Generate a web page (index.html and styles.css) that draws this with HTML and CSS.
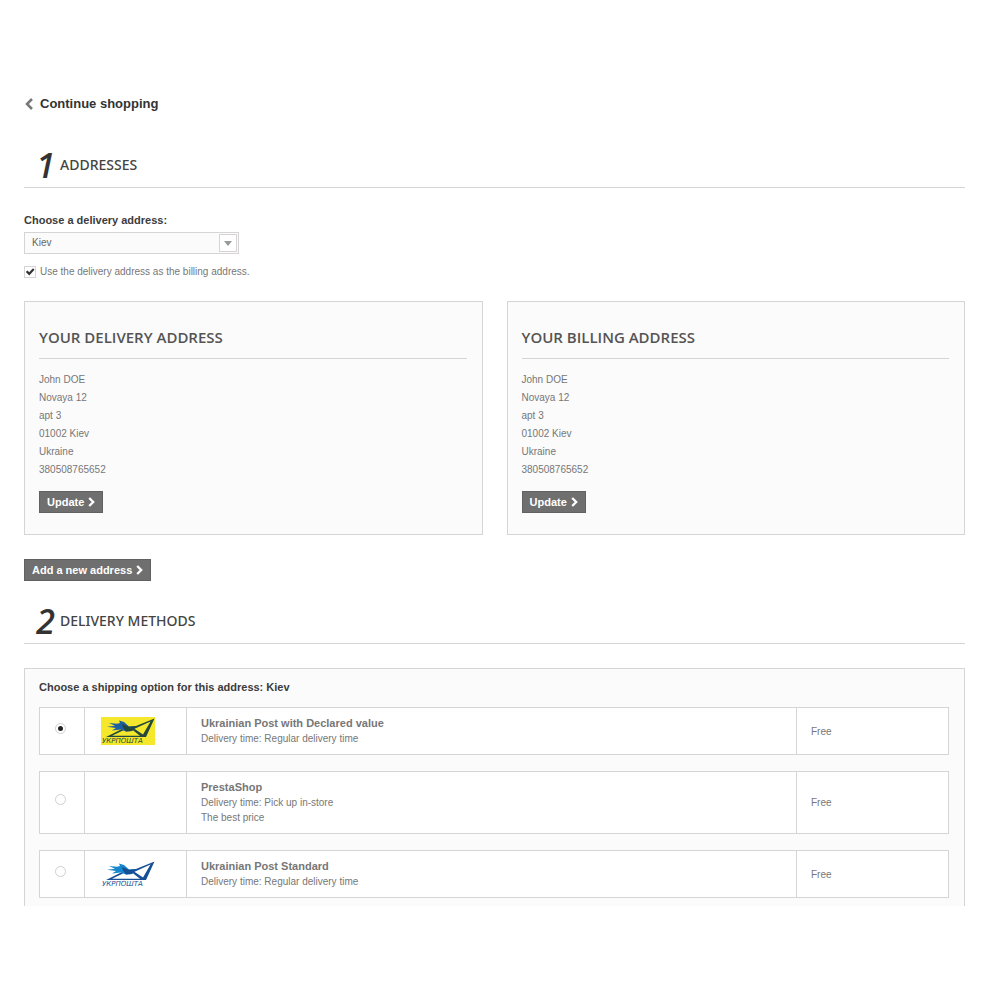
FILE: index.html
```html
<!DOCTYPE html>
<html lang="en">
<head>
<meta charset="utf-8">
<meta name="viewport" content="width=device-width, initial-scale=1">
<title>Checkout</title>
<link rel="stylesheet" href="styles.css">
</head>
<body>
<svg class="sprite" aria-hidden="true">
  <symbol id="chevron-right" viewBox="0 0 7 10"><path d="M1.200 1 5.200 5 1.200 9" fill="none" stroke="currentColor" stroke-width="2.300"/></symbol>
  <symbol id="post-logo" viewBox="0 0 54 28">
    <path d="M5 20 L22 11.500 L24 12.500 L11 18.700 H40 L41 20 Z" fill="var(--dark)"/>
    <path d="M53.500 1.500 L45 20 H40.500 L31 12.500 L33 11.500 L42 17.500 L49.500 4.500 L33 12 L30 11 Z" fill="var(--dark)"/>
    <path d="M18 3.500 L23 5 L28 9.500 L35.500 9 L31 14 L25 14.500 L20 12.500 L11 13.500 L15 11 L6 9.800 L14 8.800 L8 6 L16 6.800 L19 6 Z" fill="var(--wing)"/>
    <path d="M21 7 L28 9.800 L35.500 9 L31 14 L25 14.500 L22 10.500 Z" fill="var(--dark)"/>
    <text class="wordmark" x="1" y="26">УКРПОШТА</text>
  </symbol>
</svg>
<main class="page">
  <a class="back" href="#"><svg class="back-icon" viewBox="0 0 9 12" aria-hidden="true"><path d="M8 1 3 6 8 11" fill="none" stroke="currentColor" stroke-width="2.500"/></svg>Continue shopping</a>

  <h1 class="step"><span class="step-number">1</span>ADDRESSES</h1>

  <div class="chooser">
    <label class="chooser-label" for="address">Choose a delivery address:</label>
    <div class="select">
      <select id="address"><option>Kiev</option></select>
      <span class="select-arrow" aria-hidden="true"></span>
    </div>
    <label class="same"><input class="tick" type="checkbox" checked>Use the delivery address as the billing address.</label>
  </div>

  <div class="cards">
    <section class="card">
      <h2 class="card-title">YOUR DELIVERY ADDRESS</h2>
      <ul class="lines"><li>John DOE</li><li>Novaya 12</li><li>apt 3</li><li>01002 Kiev</li><li>Ukraine</li><li>380508765652</li></ul>
      <button class="button" type="button">Update<svg class="chevron" aria-hidden="true"><use href="#chevron-right"/></svg></button>
    </section>
    <section class="card">
      <h2 class="card-title">YOUR BILLING ADDRESS</h2>
      <ul class="lines"><li>John DOE</li><li>Novaya 12</li><li>apt 3</li><li>01002 Kiev</li><li>Ukraine</li><li>380508765652</li></ul>
      <button class="button" type="button">Update<svg class="chevron" aria-hidden="true"><use href="#chevron-right"/></svg></button>
    </section>
  </div>

  <button class="button" type="button">Add a new address<svg class="chevron" aria-hidden="true"><use href="#chevron-right"/></svg></button>

  <h1 class="step step-delivery"><span class="step-number">2</span>DELIVERY METHODS</h1>

  <section class="shipping">
    <h3 class="shipping-title">Choose a shipping option for this address: Kiev</h3>
    <div class="options">
      <div class="option">
        <div class="cell pick"><input class="radio" type="radio" name="carrier" id="declared" checked></div>
        <div class="cell"><svg class="logo logo-yellow" role="img" aria-label="Ukrposhta"><use href="#post-logo"/></svg></div>
        <label class="cell details" for="declared"><strong>Ukrainian Post with Declared value</strong><span>Delivery time: Regular delivery time</span></label>
        <div class="cell">Free</div>
      </div>
      <div class="option">
        <div class="cell pick"><input class="radio" type="radio" name="carrier" id="store"></div>
        <div class="cell"></div>
        <label class="cell details" for="store"><strong>PrestaShop</strong><span>Delivery time: Pick up in-store</span><span>The best price</span></label>
        <div class="cell">Free</div>
      </div>
      <div class="option">
        <div class="cell pick"><input class="radio" type="radio" name="carrier" id="standard"></div>
        <div class="cell"><svg class="logo logo-blue" role="img" aria-label="Ukrposhta"><use href="#post-logo"/></svg></div>
        <label class="cell details" for="standard"><strong>Ukrainian Post Standard</strong><span>Delivery time: Regular delivery time</span></label>
        <div class="cell">Free</div>
      </div>
    </div>
  </section>
</main>
</body>
</html>
```
FILE: styles.css
```css
* { box-sizing: border-box; }
body {
  margin: 0;
  background: #fff;
  color: #777;
  font: 10px/15px "Liberation Sans", Arial, sans-serif;
}
h1, h2, h3, ul { margin: 0; padding: 0; }
ul { list-style: none; }
.sprite { display: none; }
.page { padding: 95px 35px 94px 24px; }

.back {
  display: flex;
  align-items: center;
  gap: 7px;
  color: #333;
  font-size: 13px;
  font-weight: bold;
  line-height: 18px;
  text-decoration: none;
}
.back-icon { width: 9px; height: 12px; color: #777; }

.step {
  display: flex;
  align-items: center;
  gap: 5px;
  margin-top: 32px;
  padding: 0 0 2px 10px;
  border-bottom: 1px solid #d6d4d4;
  color: #444;
  font: 500 14px/40px "Noto Sans", "Open Sans", sans-serif;
}
.step-number {
  width: 21px;
  color: #333;
  font-family: "Open Sans", sans-serif;
  font-size: 34px;
  font-style: italic;
  font-weight: 600;
  text-align: right;
}
.step-delivery { margin-top: 20px; }

.chooser { padding: 24px 0 20px; }
.chooser-label { display: block; color: #3c3c3c; font-size: 11px; font-weight: bold; line-height: 16px; }
.select { position: relative; max-width: 215px; margin: 4px 0 9px; }
.select select {
  display: block;
  width: 100%;
  height: 22px;
  padding: 0 24px 0 7px;
  appearance: none;
  border: 1px solid #d6d4d4;
  border-radius: 0;
  background: #fbfbfb;
  color: #666;
  font: 10px/20px "Liberation Sans", Arial, sans-serif;
}
.select-arrow {
  position: absolute;
  top: 2px;
  right: 2px;
  display: grid;
  place-items: center;
  width: 18px;
  height: 18px;
  border: 1px solid #d6d4d4;
  background: #fff;
  pointer-events: none;
}
.select-arrow::before { content: ""; border: solid transparent; border-width: 5px 4px 0; border-top-color: #999; }
.same { display: flex; align-items: center; gap: 4px; line-height: 18px; }
.tick {
  width: 12px;
  height: 12px;
  margin: 0;
  appearance: none;
  border: 1px solid #d6d4d4;
  background: #fff;
}
.tick:checked::before { content: ""; display: block; height: 100%; background: #333; clip-path: polygon(8% 50%, 25% 35%, 42% 52%, 80% 12%, 95% 28%, 43% 84%); }

.cards { display: grid; grid-template-columns: 1fr 1fr; gap: 24px; margin-bottom: 24px; }
.card { padding: 19px 15px 21px 14px; border: 1px solid #d6d4d4; background: #fbfbfb; }
.card-title {
  padding-bottom: 5px;
  border-bottom: 1px solid #d6d4d4;
  color: #555454;
  font: 600 15px/32px "Open Sans", sans-serif;
}
.lines { padding: 12px 0; line-height: 18px; }
.button {
  display: flex;
  align-items: center;
  gap: 4px;
  width: fit-content;
  height: 22px;
  padding: 0 7px;
  border: 1px solid #616161;
  border-radius: 0;
  background: #6f6f6f;
  color: #fff;
  font: bold 11px/20px "Liberation Sans", Arial, sans-serif;
}
.chevron { width: 7px; height: 10px; }

.shipping { margin-top: 24px; padding: 10px 15px 8px 14px; border: 1px solid #d6d4d4; border-bottom: 0; background: #fbfbfb; }
.shipping-title { margin-bottom: 12px; color: #3c3c3c; font-size: 11px; line-height: 16px; }
.options { display: grid; gap: 16px; }
.option { display: grid; grid-template-columns: 44px 102px 1fr 152px; border: 1px solid #d6d4d4; background: #fff; }
.cell { display: flex; align-items: center; padding: 8px 14px; }
.cell + .cell { border-left: 1px solid #d6d4d4; }
.pick { justify-content: center; padding: 0 3px 6px 0; }
.details { flex-direction: column; align-items: flex-start; justify-content: center; }
.details strong { font-size: 11px; }
.radio {
  display: grid;
  place-items: center;
  width: 11px;
  height: 11px;
  margin: 0;
  appearance: none;
  border: 1px solid #d0d0d0;
  border-radius: 50%;
  background: #fff;
}
.radio:checked::before { content: ""; width: 5px; height: 5px; border-radius: 50%; background: #222; }
.logo { width: 54px; height: 28px; margin: 0 2px; }
.logo-yellow { --dark: #24483c; --wing: #1d5fa0; background: #f5e72c; }
.logo-blue { --dark: #174f96; --wing: #1687cc; }
.wordmark { fill: var(--dark); font: italic 7px "DejaVu Sans", sans-serif; }
```
